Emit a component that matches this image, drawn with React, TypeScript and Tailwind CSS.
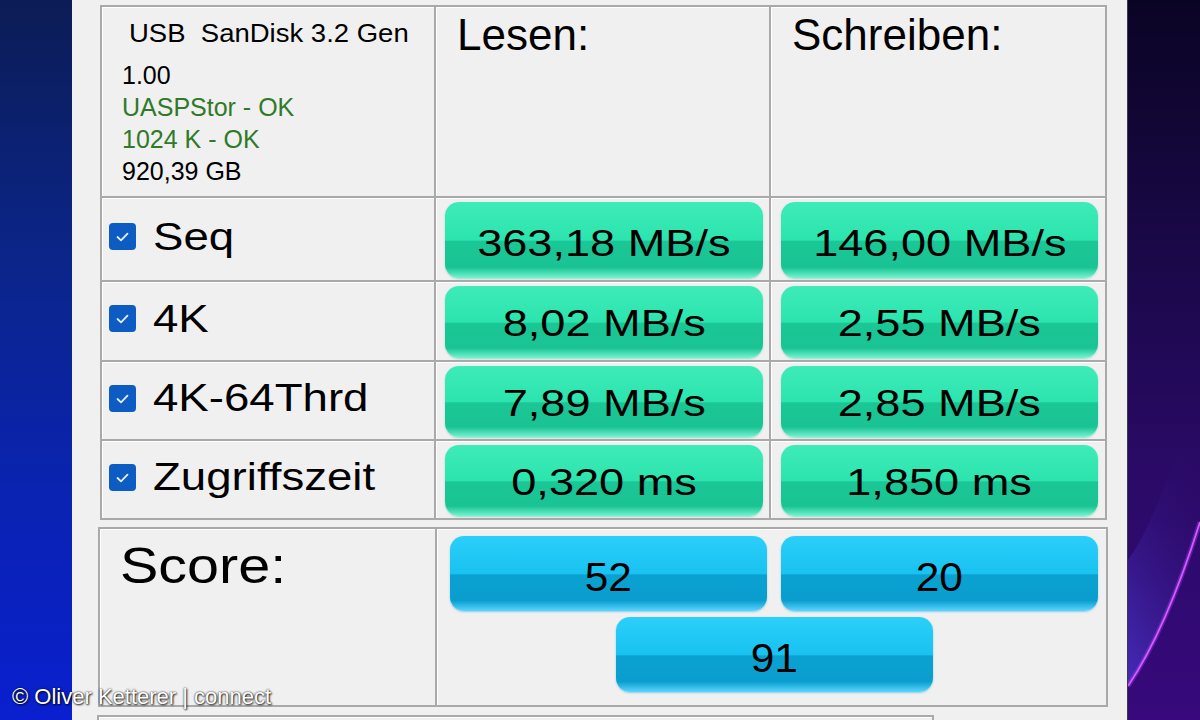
import type { ReactNode } from 'react';

const font = 'font-["Liberation_Sans",Arial,sans-serif]';
const cell = 'border-r-2 border-b-2 border-[#a9a9a9] shadow-[inset_1px_1px_0_#ffffff]';

function Pill({ tone, children, className = '' }: { tone: 'green' | 'blue'; children: ReactNode; className?: string }) {
  const bg =
    tone === 'green'
      ? 'bg-[linear-gradient(to_bottom,#3eebb9_0%,#2ce4ae_50%,#1bc796_52%,#1ac393_86%,#74f4d0_100%)] shadow-[0_1px_2px_rgba(40,200,150,0.45)]'
      : 'bg-[linear-gradient(to_bottom,#2bcff9_0%,#19c2f1_50%,#0aa1d1_52%,#0a9ecf_86%,#5ad6ff_100%)] shadow-[0_1px_2px_rgba(20,160,220,0.45)]';
  return (
    <div className={`flex items-center justify-center rounded-[14px] text-black ${bg} ${className}`}>
      {children}
    </div>
  );
}

function Check() {
  return (
    <div className="w-[27px] h-[27px] shrink-0 rounded-[4px] bg-[#0c5cc3] flex items-center justify-center">
      <svg width="27" height="27" viewBox="0 0 27 27">
        <polyline points="8.5,14 12,17.3 18.5,10.7" fill="none" stroke="#e8f0ff" strokeWidth="1.8" strokeLinecap="round" strokeLinejoin="round" />
      </svg>
    </div>
  );
}

const rows = [
  { label: 'Seq', read: '363,18 MB/s', write: '146,00 MB/s', h: 'pt-[6px]' },
  { label: '4K', read: '8,02 MB/s', write: '2,55 MB/s', h: 'pt-[3px]' },
  { label: '4K-64Thrd', read: '7,89 MB/s', write: '2,85 MB/s', h: 'pt-[3px]' },
  { label: 'Zugriffszeit', read: '0,320 ms', write: '1,850 ms', h: 'pt-[3px]' },
];

export default function App() {
  return (
    <div className={`relative w-[1200px] h-[720px] flex overflow-hidden ${font}`}>
      <div className="w-[72px] shrink-0 bg-[linear-gradient(to_bottom,#0c1c55_0%,#0b2588_35%,#0a23b3_70%,#0a1fcf_100%)]" />

      <div className="w-[1056px] shrink-0 bg-[#f0f0f0] pl-[28px] pt-[5px] flex flex-col border-r border-[#3a3a4a]">
        <div className="shrink-0 w-[1007px] border-l-2 border-t-2 border-[#a9a9a9] grid grid-cols-[334px_335px_336px] grid-rows-[191px_84px_80px_79px_79px]">
          <div className={`${cell} pt-[10px] text-[25px] leading-[32px] text-black`}>
            <div className="pl-[27px]">
              <span className="inline-block origin-left scale-x-[1.1] whitespace-pre">USB  SanDisk 3.2 Gen</span>
            </div>
            <div className="pl-[20px] mt-[10px]">
              <div>1.00</div>
              <div className="text-[#2f7a28]">UASPStor - OK</div>
              <div className="text-[#2f7a28]">1024 K - OK</div>
              <div>920,39 GB</div>
            </div>
          </div>
          <div className={`${cell} pl-[21px] pt-[6px] text-[44px] leading-none`}>Lesen:</div>
          <div className={`${cell} pl-[21px] pt-[6px] text-[44px] leading-none`}>Schreiben:</div>

          {rows.map((r) => (
            <div key={r.label} className="contents">
              <div className={`${cell} flex items-center pl-[7px] pb-[5px] gap-[17px]`}>
                <Check />
                <span className="inline-block origin-left scale-x-[1.2] text-[38px] leading-none">{r.label}</span>
              </div>
              <div className={`${cell} flex pl-[9px] pr-[6px] pt-[4px] pb-[2px]`}>
                <Pill tone="green" className={`flex-1 ${r.h}`}>
                  <span className="inline-block scale-x-[1.22] text-[37px] leading-none">{r.read}</span>
                </Pill>
              </div>
              <div className={`${cell} flex pl-[10px] pr-[7px] pt-[4px] pb-[2px]`}>
                <Pill tone="green" className={`flex-1 ${r.h}`}>
                  <span className="inline-block scale-x-[1.22] text-[37px] leading-none">{r.write}</span>
                </Pill>
              </div>
            </div>
          ))}
        </div>

        <div className="shrink-0 mt-[7px] -ml-[2px] w-[1010px] h-[180px] border-2 border-[#a9a9a9] grid grid-cols-[337px_1fr]">
          <div className="border-r-2 border-[#a9a9a9] shadow-[inset_1px_1px_0_#ffffff] pl-[20px] pt-[12px]">
            <span className="inline-block origin-left scale-x-[1.15] text-[50px] leading-none">Score:</span>
          </div>
          <div className="shadow-[inset_1px_1px_0_#ffffff] pl-[13px] pr-[8px] pt-[7px] grid grid-cols-2 gap-x-[14px] gap-y-[6px] content-start">
            <Pill tone="blue" className="h-[75px] pt-[6px]">
              <span className="inline-block scale-x-[1.06] text-[40px] leading-none">52</span>
            </Pill>
            <Pill tone="blue" className="h-[75px] pt-[6px]">
              <span className="inline-block scale-x-[1.06] text-[40px] leading-none">20</span>
            </Pill>
            <Pill tone="blue" className="col-span-2 justify-self-center w-[317px] h-[75px] pt-[6px]">
              <span className="inline-block scale-x-[1.06] text-[40px] leading-none">91</span>
            </Pill>
          </div>
        </div>

        <div className="shrink-0 mt-[8px] -ml-[3px] w-[837px] h-[20px] border-2 border-[#a9a9a9] shadow-[inset_1px_1px_0_#ffffff]" />
      </div>

      <div className="relative flex-1 bg-[linear-gradient(to_bottom,#0a0424_0%,#1a0848_35%,#2a0a66_65%,#37097c_100%)]">
        <svg className="absolute inset-0" width="72" height="720" viewBox="0 0 72 720">
          <defs>
            <linearGradient id="haze" x1="0" y1="1" x2="0.4" y2="0">
              <stop offset="0" stopColor="#4a38d0" stopOpacity="0.75" />
              <stop offset="1" stopColor="#2a0a66" stopOpacity="0" />
            </linearGradient>
          </defs>
          <path d="M0 686 Q38 630 72 522 L72 380 Q30 520 0 560 Z" fill="url(#haze)" />
          <path d="M0 686 Q38 630 72 522" fill="none" stroke="#b23cf5" strokeWidth="5" opacity="0.35" />
          <path d="M0 686 Q38 630 72 522" fill="none" stroke="#d45bff" strokeWidth="1.8" />
        </svg>
      </div>

      <div className="absolute left-[12px] top-[686px] text-white text-[22px] leading-none whitespace-nowrap [text-shadow:0_0_2px_rgba(0,0,0,0.9),1px_1px_2px_rgba(0,0,0,0.8)]">
        © Oliver Ketterer | connect
      </div>
    </div>
  );
}
